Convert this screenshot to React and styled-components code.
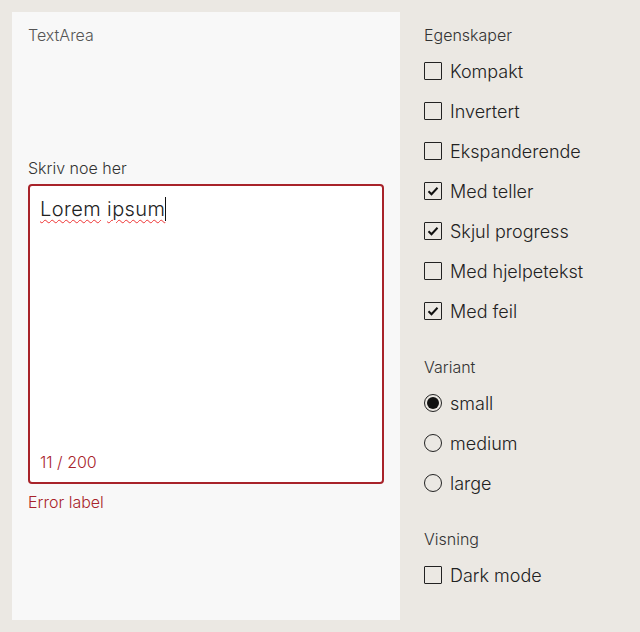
import styled, { createGlobalStyle } from 'styled-components'

const GlobalStyle = createGlobalStyle`
  body {
    margin: 0;
    background: #ebe8e3;
    font-family: Inter, "Liberation Sans", sans-serif;
    color: #222;
  }
`

const Page = styled.div`
  display: flex;
  gap: 24px;
  padding: 12px;
  height: 632px;
  box-sizing: border-box;
`

const Preview = styled.div`
  width: 388px;
  height: 608px;
  box-sizing: border-box;
  background: #f8f8f8;
  padding: 12px 16px;
  display: flex;
  flex-direction: column;
`

const PreviewTitle = styled.div`
  font-size: 16px;
  line-height: 22px;
  color: #555;
  font-weight: 300;
  margin-bottom: 110px;
`

const FieldLabel = styled.div`
  font-size: 16px;
  line-height: 24px;
  color: #333;
  font-weight: 300;
  margin-bottom: 4px;
`

const Area = styled.div`
  height: 300px;
  box-sizing: border-box;
  background: #fff;
  border: 2px solid ${p => (p.$error ? '#a8232a' : '#222')};
  border-radius: 4px;
  padding: 10px 10px 8px;
  display: flex;
  flex-direction: column;
  justify-content: space-between;
`

const Value = styled.div`
  font-size: 20px;
  line-height: 26px;
  letter-spacing: 0.4px;
  color: #222;
  font-weight: 300;
`

const Word = styled.span`
  text-decoration: underline wavy #e33;
  text-decoration-thickness: 1px;
  text-underline-offset: 3px;
`

const Caret = styled.span`
  display: inline-block;
  width: 1px;
  height: 24px;
  background: #111;
  vertical-align: -5px;
`

const Counter = styled.div`
  font-size: 16px;
  line-height: 24px;
  color: #a8232a;
  font-weight: 300;
`

const ErrorText = styled.div`
  margin-top: 6px;
  font-size: 16px;
  line-height: 24px;
  color: #a8232a;
  font-weight: 300;
`

const Controls = styled.div`
  display: flex;
  flex-direction: column;
  padding-top: 11px;
`

const Group = styled.div`
  display: flex;
  flex-direction: column;
  margin-bottom: 24px;
`

const GroupTitle = styled.div`
  font-size: 16px;
  line-height: 24px;
  color: #333;
  font-weight: 300;
  margin-bottom: 4px;
`

const Option = styled.label`
  display: flex;
  align-items: center;
  gap: 8px;
  height: 40px;
  font-size: 18px;
  font-weight: 300;
  color: #222;
`

const Box = styled.span`
  width: 18px;
  height: 18px;
  box-sizing: border-box;
  border: 1.5px solid #222;
  border-radius: ${p => (p.$round ? '50%' : '1px')};
  display: flex;
  align-items: center;
  justify-content: center;
  background: transparent;
`

const Dot = styled.span`
  width: 12px;
  height: 12px;
  border-radius: 50%;
  background: #111;
`

const Check = () => (
  <svg width="12" height="10" viewBox="0 0 12 10">
    <path d="M1.5 5.2 L4.5 8.2 L10.5 1.8" fill="none" stroke="#111" strokeWidth="2" />
  </svg>
)

const Checkbox = ({ label, checked }) => (
  <Option>
    <Box>{checked && <Check />}</Box>
    {label}
  </Option>
)

const Radio = ({ label, checked }) => (
  <Option>
    <Box $round>{checked && <Dot />}</Box>
    {label}
  </Option>
)

const props = [
  ['Kompakt', false],
  ['Invertert', false],
  ['Ekspanderende', false],
  ['Med teller', true],
  ['Skjul progress', true],
  ['Med hjelpetekst', false],
  ['Med feil', true],
]

export default function App() {
  return (
    <>
      <GlobalStyle />
      <Page>
        <Preview>
          <PreviewTitle>TextArea</PreviewTitle>
          <FieldLabel>Skriv noe her</FieldLabel>
          <Area $error>
            <Value>
              <Word>Lorem</Word> <Word>ipsum</Word>
              <Caret />
            </Value>
            <Counter>11 / 200</Counter>
          </Area>
          <ErrorText>Error label</ErrorText>
        </Preview>
        <Controls>
          <Group>
            <GroupTitle>Egenskaper</GroupTitle>
            {props.map(([l, c]) => (
              <Checkbox key={l} label={l} checked={c} />
            ))}
          </Group>
          <Group>
            <GroupTitle>Variant</GroupTitle>
            <Radio label="small" checked />
            <Radio label="medium" />
            <Radio label="large" />
          </Group>
          <Group>
            <GroupTitle>Visning</GroupTitle>
            <Checkbox label="Dark mode" />
          </Group>
        </Controls>
      </Page>
    </>
  )
}
